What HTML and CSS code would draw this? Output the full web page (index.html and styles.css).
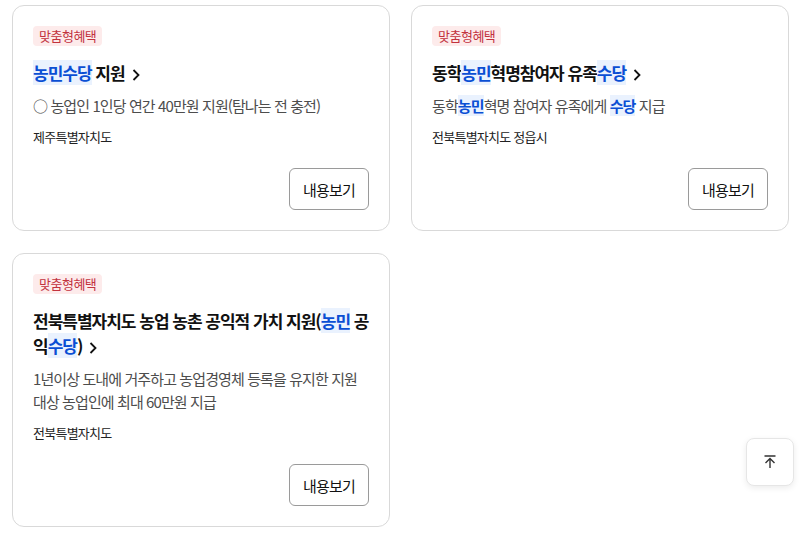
FILE: index.html
```html
<!DOCTYPE html>
<html lang="ko">
<head>
<meta charset="utf-8">
<title>맞춤형혜택</title>
<link rel="stylesheet" href="styles.css">
</head>
<body>
<main class="grid">
  <article class="card">
    <span class="badge">맞춤형혜택</span>
    <h3 class="title"><span class="hl">농민수당</span> 지원<svg class="chev" viewBox="0 0 8 12" width="8" height="12"><path d="M1.5 1 L6.5 6 L1.5 11" fill="none" stroke="#111" stroke-width="1.8"/></svg></h3>
    <p class="desc">○ 농업인 1인당 연간 40만원 지원(탐나는 전 충전)</p>
    <p class="region">제주특별자치도</p>
    <div class="actions"><button class="btn">내용보기</button></div>
  </article>
  <article class="card">
    <span class="badge">맞춤형혜택</span>
    <h3 class="title">동학<span class="hl">농민</span>혁명참여자 유족<span class="hl">수당</span><svg class="chev" viewBox="0 0 8 12" width="8" height="12"><path d="M1.5 1 L6.5 6 L1.5 11" fill="none" stroke="#111" stroke-width="1.8"/></svg></h3>
    <p class="desc">동학<b class="hl">농민</b>혁명 참여자 유족에게 <b class="hl">수당</b> 지급</p>
    <p class="region">전북특별자치도 정읍시</p>
    <div class="actions"><button class="btn">내용보기</button></div>
  </article>
  <article class="card">
    <span class="badge">맞춤형혜택</span>
    <h3 class="title">전북특별자치도 농업 농촌 공익적 가치 지원(<span class="hl">농민</span> 공익<span class="hl">수당</span>)<svg class="chev" viewBox="0 0 8 12" width="8" height="12"><path d="M1.5 1 L6.5 6 L1.5 11" fill="none" stroke="#111" stroke-width="1.8"/></svg></h3>
    <p class="desc">1년이상 도내에 거주하고 농업경영체 등록을 유지한 지원 대상 농업인에 최대 60만원 지급</p>
    <p class="region">전북특별자치도</p>
    <div class="actions"><button class="btn">내용보기</button></div>
  </article>
</main>
<button class="to-top" aria-label="맨 위로">
  <svg viewBox="0 0 16 16" width="16" height="16"><path d="M2.5 2 H13.5 M8 14 V5 M3.5 9 L8 4.5 L12.5 9" fill="none" stroke="#333" stroke-width="1.4"/></svg>
</button>
</body>
</html>
```

FILE: styles.css
```css
* { box-sizing: border-box; }
html, body { margin: 0; padding: 0; background: #fff; }
body {
  font-family: "Noto Sans CJK KR", "Noto Sans", sans-serif;
  color: #111;
  padding: 5px 11px 0 12px;
}
.grid {
  display: grid;
  grid-template-columns: 378px 378px;
  column-gap: 21px;
  row-gap: 22px;
  align-items: stretch;
}
.card {
  border: 1px solid #d9d9d9;
  border-radius: 12px;
  padding: 20px 20px 20px 20px;
  display: flex;
  flex-direction: column;
  align-items: flex-start;
}
.badge {
  display: inline-block;
  height: 20px;
  line-height: 20px;
  padding: 0 6px;
  border-radius: 4px;
  background: #fdebeb;
  color: #c2323e;
  font-size: 13px;
  letter-spacing: -0.5px;
}
.title {
  margin: 14px 0 0;
  font-size: 17px;
  line-height: 25px;
  font-weight: 700;
  letter-spacing: -1px;
  color: #111;
}
.hl {
  color: #0a4fd4;
  background: #eaf2fe;
  font-weight: 700;
}
.chev {
  margin-left: 7px;
  vertical-align: -1px;
}
.desc {
  margin: 9px 0 0;
  font-size: 15px;
  line-height: 23px;
  color: #4d4d4d;
  letter-spacing: -0.9px;
}
.region {
  margin: 10px 0 0;
  font-size: 13px;
  line-height: 20px;
  color: #222;
  letter-spacing: -0.75px;
}
.actions {
  align-self: stretch;
  display: flex;
  justify-content: flex-end;
  margin-top: auto;
  padding-top: 21px;
}
.btn {
  width: 80px;
  height: 42px;
  border: 1px solid #9a9a9a;
  border-radius: 6px;
  background: #fff;
  font-family: inherit;
  font-size: 15px;
  color: #111;
  letter-spacing: -0.8px;
  cursor: pointer;
}
.to-top {
  position: fixed;
  right: 6px;
  bottom: 47px;
  width: 48px;
  height: 48px;
  border: 1px solid #e6e6e6;
  border-radius: 8px;
  background: #fff;
  box-shadow: 0 2px 6px rgba(0,0,0,0.08);
  display: flex;
  align-items: center;
  justify-content: center;
  padding: 0;
}
```
